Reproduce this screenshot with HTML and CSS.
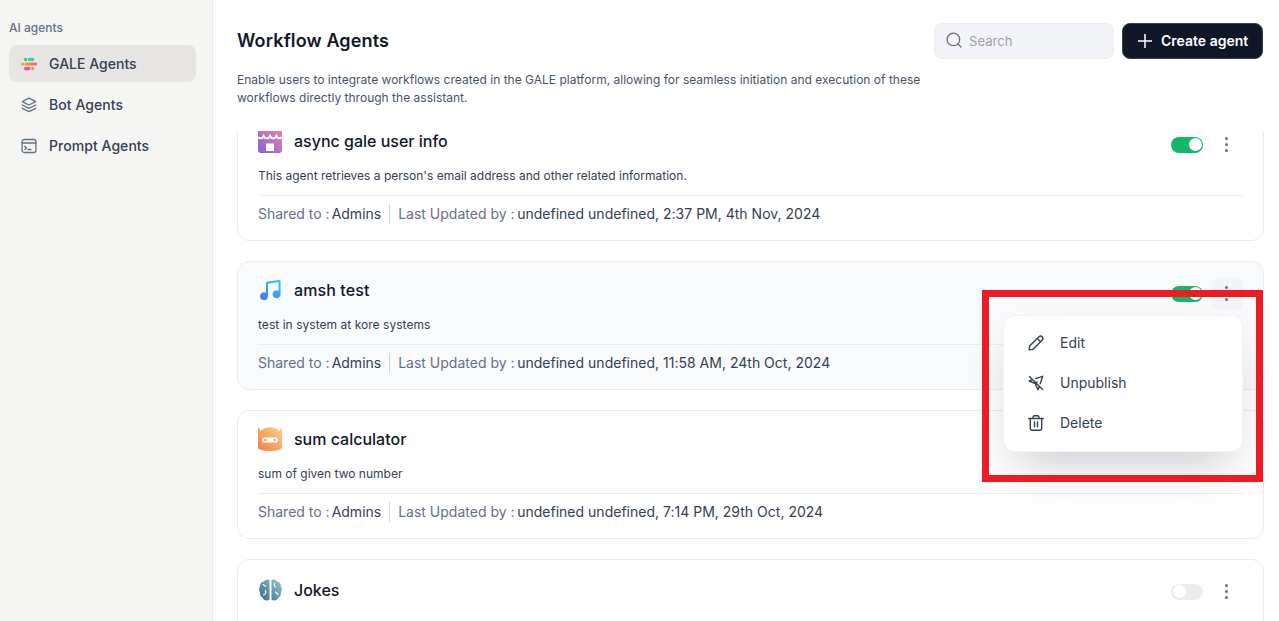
FILE: index.html
```html
<!DOCTYPE html>
<html lang="en">
<head>
<meta charset="utf-8">
<title>Workflow Agents</title>
<link rel="stylesheet" href="styles.css">
</head>
<body>
<div class="app">
  <aside class="sidebar">
    <div class="side-label">AI agents</div>
    <nav class="nav">
      <a class="nav-item active">
        <svg width="16" height="16" viewBox="0 0 16 16">
          <defs><linearGradient id="bar"><stop offset="0" stop-color="#ff9c1c"/><stop offset="1" stop-color="#ff5f72"/></linearGradient></defs>
          <circle cx="4.6" cy="3.4" r="1.6" fill="#22c98b"/><rect x="7" y="1.8" width="6.2" height="3.2" rx="1.2" fill="#2bd3bd"/>
          <circle cx="1.6" cy="8" r="1.6" fill="#ff9c1c"/><rect x="3.6" y="6.4" width="12.4" height="3.2" rx="1.4" fill="url(#bar)"/>
          <rect x="3" y="11" width="6.4" height="3.2" rx="1.4" fill="#f649a7"/><circle cx="11.6" cy="12.6" r="1.6" fill="#ff7b62"/>
        </svg>
        <span>GALE Agents</span>
      </a>
      <a class="nav-item">
        <svg class="line" width="16" height="16" viewBox="0 0 16 16"><path d="M8 1.2 14.7 4.6 8 8 1.3 4.6zM1.3 8 8 11.4 14.7 8M1.3 11.3 8 14.7 14.7 11.3"/></svg>
        <span>Bot Agents</span>
      </a>
      <a class="nav-item prompt">
        <svg class="line" width="16" height="16" viewBox="0 0 16 16"><rect x="1.1" y="1.5" width="13.8" height="13" rx="2"/><path d="M1.1 5H14.9M3.7 8.2 5.5 9.8 3.7 11.4M7 11.5H10"/></svg>
        <span>Prompt Agents</span>
      </a>
    </nav>
  </aside>
  <main class="main">
    <header class="header">
      <h1>Workflow Agents</h1>
      <div class="search">
        <svg class="line" width="18" height="18" viewBox="0 0 18 18"><circle cx="8.4" cy="7.4" r="6.3"/><path d="M13 12 16 15"/></svg>
        <span>Search</span>
      </div>
      <button class="create">
        <svg width="14" height="14" viewBox="0 0 14 14"><path d="M7 0V14M0 7H14"/></svg>
        <span>Create agent</span>
      </button>
    </header>
    <p class="intro">Enable users to integrate workflows created in the GALE platform, allowing for seamless initiation and execution of these workflows directly through the assistant.</p>
    <section class="list">
      <article class="card">
        <div class="card-head">
          <svg width="24" height="24" viewBox="0 0 24 24">
            <defs><linearGradient id="shop" x1="0" y1="1" x2="1" y2="0"><stop offset="0" stop-color="#8063d5"/><stop offset="1" stop-color="#ef82a4"/></linearGradient></defs>
            <rect width="24" height="24" rx="3" fill="url(#shop)"/>
            <path d="M0 8.2Q2.300 10 4.400 8.700L5.600 6.700 6.800 8.700Q9 10 10.800 8.700L12 6.700 13.200 8.700Q15 10 17.200 8.700L18.400 6.700 19.600 8.700Q21.700 10 24 8.200" fill="none" stroke="#fff" stroke-width="1.9"/>
            <rect x="8" y="14.5" width="8" height="7.5" rx=".6" fill="#fff"/>
          </svg>
          <h2>async gale user info</h2>
          <span class="toggle on"></span><span class="more"><i></i><i></i><i></i></span>
        </div>
        <p class="desc">This agent retrieves a person's email address and other related information.</p>
        <div class="meta"><span>Shared to :</span><b class="shared">Admins</b><span class="updated">Last Updated by :</span><b class="stamp">undefined undefined, 2:37 PM, 4th Nov, 2024</b></div>
      </article>
      <article class="card hover">
        <div class="card-head">
          <svg width="24" height="24" viewBox="0 0 24 24">
            <defs><linearGradient id="note" x1="0" y1="1" x2="1" y2="0"><stop offset="0" stop-color="#4c71fa"/><stop offset="1" stop-color="#29cbe8"/></linearGradient></defs>
            <path fill="url(#note)" d="M8 5.2Q8 4 9.200 3.800L20.600 2Q22.600 1.800 22.600 3.600V16.200A4 4 0 1 1 20.600 12.700V4.100L10 5.800V18.200A4 4 0 1 1 8 14.700z"/>
          </svg>
          <h2 class="wide">amsh test</h2>
          <span class="toggle on"></span><span class="more open"><i></i><i></i><i></i></span>
        </div>
        <p class="desc wide">test in system at kore systems</p>
        <div class="meta"><span>Shared to :</span><b class="shared">Admins</b><span class="updated">Last Updated by :</span><b class="stamp">undefined undefined, 11:58 AM, 24th Oct, 2024</b></div>
      </article>
      <article class="card">
        <div class="card-head">
          <svg width="24" height="24" viewBox="0 0 24 24">
            <defs><linearGradient id="mask" x1="0" y1="1" x2="1" y2="0"><stop offset="0" stop-color="#f57d3d"/><stop offset="1" stop-color="#fad18e"/></linearGradient></defs>
            <path fill="url(#mask)" d="M0 1Q.2 0 1 1L2.500 4Q6 .2 12 .2T21.500 4L23 1Q23.800 0 24 1V20Q24 22 22 22.500Q12 25.500 2 22.500Q0 22 0 20z"/>
            <rect x="4" y="10.400" width="16" height="5.200" rx="2.600" fill="#fff"/><circle cx="7.200" cy="13" r="1.200" fill="#f7a15f"/><circle cx="16.800" cy="13" r="1.200" fill="#f7a15f"/>
          </svg>
          <h2>sum calculator</h2>
        </div>
        <p class="desc">sum of given two number</p>
        <div class="meta"><span>Shared to :</span><b class="shared">Admins</b><span class="updated">Last Updated by :</span><b class="stamp">undefined undefined, 7:14 PM, 29th Oct, 2024</b></div>
      </article>
      <article class="card">
        <div class="card-head roomy">
          <svg width="24" height="24" viewBox="0 0 24 24">
            <defs><linearGradient id="brain" x1="0" y1="1" x2="1" y2="0"><stop offset="0" stop-color="#316b84"/><stop offset="1" stop-color="#9bc7d2"/></linearGradient></defs>
            <path fill="url(#brain)" d="M11.500 2V22Q6 23.500 4.500 19.500Q1.500 18 2 14.500Q.2 11 2 8.500Q2 4 6 3.500Q8 .5 11.500 2zM13.500 2Q17 .5 19 3.500Q23 4 23 8.500Q24.800 11 23 14.500Q23.500 18 20.500 19.500Q19 23.500 13.500 22z"/>
            <path fill="none" stroke="#fff" stroke-width="1.1" stroke-linecap="round" d="M5 6.500 7.500 8.300M5.500 17Q8.500 16 7.500 12.500M16.500 5.500Q15.500 8 17.500 9M17.500 14 20 16.500"/>
          </svg>
          <h2>Jokes</h2>
          <span class="toggle"></span><span class="more"><i></i><i></i><i></i></span>
        </div>
      </article>
    </section>
  </main>
</div>
<div class="menu">
  <div class="menu-item"><svg width="16" height="16" viewBox="0 0 16 16"><path d="M1.200 14.800 1.600 11.100 11 1.700Q12.700.4 14.300 1.800Q15.600 3.400 14.300 5L4.900 14.400zM9.200 3.500 12.500 6.800"/></svg><span>Edit</span></div>
  <div class="menu-item"><svg width="16" height="16" viewBox="0 0 16 16"><path d="M1.500 1.500 14.500 14.500M7.500 3.600 14.700 1.300 12.200 8.800M4.500 4.700 1.200 6 7.300 8.700 10 14.800 11.300 11.500M7.300 8.700 9 7"/></svg><span>Unpublish</span></div>
  <div class="menu-item"><svg width="16" height="16" viewBox="0 0 16 16"><path d="M.8 3.500H15.200M5 3.500V2.200Q5 .8 6.400.8H9.600Q11 .8 11 2.200V3.500M2.300 3.500V13.200Q2.300 15.200 4.300 15.200H11.700Q13.700 15.200 13.700 13.200V3.500M6.500 7V11.700M9.500 7V11.700"/></svg><span>Delete</span></div>
</div>
<div class="highlight"></div>
</body>
</html>
```
FILE: styles.css
```css
* { box-sizing: border-box; }
body { margin: 0; background: #fff; font-family: Inter, "Liberation Sans", sans-serif; color: #344054; overflow: hidden; }
h1, h2, p { margin: 0; }
svg { display: block; flex: none; }
.app { display: flex; height: 621px; }

.sidebar { width: 213px; flex: none; background: #f5f5f3; border-right: 1px solid #e4e7ec; padding: 18px 16px 0 9px; }
.side-label { font-size: 12px; line-height: 20px; font-weight: 500; color: #667085; }
.nav { display: flex; flex-direction: column; gap: 4px; margin-top: 7px; }
.nav-item { display: flex; align-items: center; gap: 12px; height: 37px; padding-left: 12px; border-radius: 8px; font-size: 14px; font-weight: 500; letter-spacing: .06px; }
.nav-item.active { background: #e7e5e4; letter-spacing: .02px; }
.nav-item.prompt { letter-spacing: .05px; }
.line { fill: none; stroke: #667085; stroke-width: 1.3; stroke-linecap: round; stroke-linejoin: round; }

.main { flex: 1; min-width: 0; display: flex; flex-direction: column; padding: 23px 15px 0 24px; }
.header { display: flex; align-items: center; height: 36px; padding-right: 1px; }
h1 { flex: 1; padding-bottom: 2px; font-size: 18px; font-weight: 600; letter-spacing: .14px; color: #101828; }
.search { display: flex; align-items: center; gap: 6px; width: 180px; height: 36px; margin-right: 8px; padding-left: 10px; background: #f2f4f7; border: 1px solid #eaecf0; border-radius: 8px; font-size: 13px; letter-spacing: .05px; color: #98a2b3; }
.create { display: flex; align-items: center; gap: 9px; width: 141px; height: 36px; padding: 0 0 0 15px; background: #101828; border: 1px solid #344054; border-radius: 8px; color: #fff; font: 600 14px Inter, sans-serif; white-space: nowrap; }
.create span { padding-bottom: 2px; }
.create svg { fill: none; stroke: #fff; stroke-width: 1.5; }
.intro { width: 700px; margin-top: 12px; font-size: 12px; line-height: 18px; letter-spacing: .01px; color: #475467; }

.list { flex: 1; min-height: 0; margin-top: 24px; overflow: hidden; }
.card { height: 129px; margin-bottom: 20px; padding: 16px 20px 0; border: 1px solid #eaecf0; border-radius: 12px; background: #fff; }
.card:first-child { margin-top: -19px; }
.card.hover { background: #f9fafb; }
.card-head { display: flex; align-items: center; height: 24px; }
.card-head.roomy { height: 26px; padding-top: 2px; }
.roomy .toggle, .roomy .more { margin-top: 3px; }
h2 { flex: 1; margin-left: 12px; font-size: 16px; line-height: 24px; font-weight: 500; color: #101828; }
h2.wide { letter-spacing: .1px; }
.toggle { width: 32px; height: 16px; margin: 7px 8px 0 0; padding: 1.5px; border-radius: 8px; background: #eaecf0; }
.toggle::before { content: ""; display: block; width: 13px; height: 13px; border-radius: 50%; background: #fff; }
.toggle.on { background: #12b76a; }
.toggle.on::before { margin-left: 16px; }
.more { display: flex; flex-direction: column; align-items: center; justify-content: center; gap: 2.7px; width: 32px; height: 32px; margin-top: 7px; padding-right: .6px; border-radius: 8px; }
.more i { width: 3px; height: 3px; border-radius: 50%; background: #667085; }
.more.open { background: #f2f4f7; }
.desc { margin-top: 14px; font-size: 12px; line-height: 18px; }
.desc.wide { letter-spacing: .04px; }
.meta { display: flex; align-items: center; height: 36px; margin-top: 10px; border-top: 1px solid #eaecf0; font-size: 14px; color: #667085; white-space: nowrap; }
.meta b { margin-left: 2px; font-weight: 400; color: #344054; }
.meta .stamp { margin-left: 2.6px; letter-spacing: .01px; }
.shared { margin-right: 8px; }
.updated { height: 20px; line-height: 20px; padding-left: 8px; border-left: 1px solid #d0d5dd; }

.menu { position: absolute; left: 1003px; top: 315px; width: 240px; height: 137px; padding: 7px 0; background: #fff; border: 1px solid #f2f4f7; border-radius: 12px; box-shadow: 0 24px 48px -12px rgba(16, 24, 40, .22); }
.menu-item { display: flex; align-items: center; gap: 16px; height: 40px; padding-left: 24px; font-size: 14px; }
.menu-item span { padding-bottom: 2px; }
.menu-item svg { fill: none; stroke: #344054; stroke-width: 1.4; stroke-linecap: round; stroke-linejoin: round; }
.highlight { position: absolute; left: 982px; top: 290px; width: 281px; height: 192px; border: 7px solid #ed1c24; }
```
